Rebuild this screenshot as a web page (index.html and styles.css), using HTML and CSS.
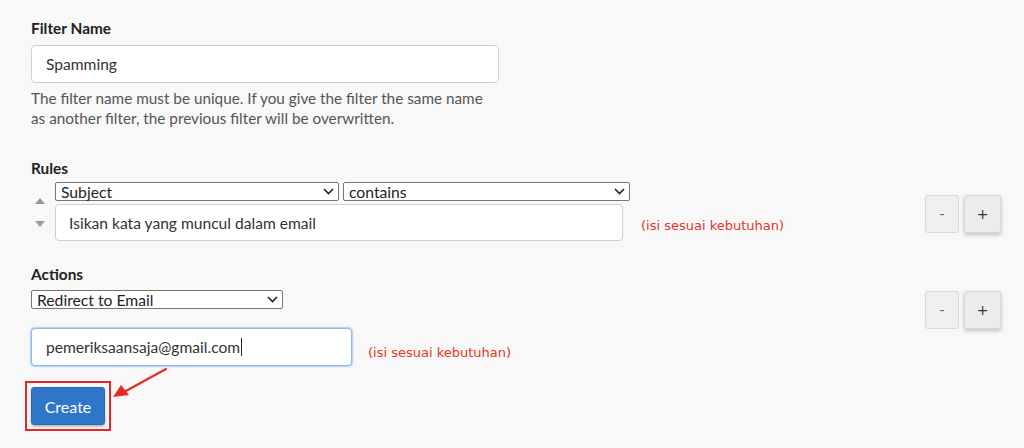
FILE: index.html
```html
<!DOCTYPE html>
<html>
<head>
<meta charset="utf-8">
<link rel="stylesheet" href="styles.css">
</head>
<body>
<div class="page">
  <div class="label first">Filter Name</div>
  <input class="field name-field" type="text" value="Spamming">
  <p class="help">The filter name must be unique. If you give the filter the same name<br>as another filter, the previous filter will be overwritten.</p>

  <div class="label rules-label">Rules</div>
  <div class="row rules-row">
    <div class="rule">
      <div class="movers">
        <span class="tri up"></span>
        <span class="tri down"></span>
      </div>
      <div class="rule-body">
        <div class="selects">
          <div class="select subject"><span>Subject</span><svg width="11" height="7" viewBox="0 0 11 7"><path d="M1 1l4.5 4.5L10 1" fill="none" stroke="#222" stroke-width="1.6"/></svg></div>
          <div class="select contains"><span>contains</span><svg width="11" height="7" viewBox="0 0 11 7"><path d="M1 1l4.5 4.5L10 1" fill="none" stroke="#222" stroke-width="1.6"/></svg></div>
        </div>
        <div class="inline">
          <input class="field rule-field" type="text" value="Isikan kata yang muncul dalam email">
          <span class="note note-rule">(isi sesuai kebutuhan)</span>
        </div>
      </div>
    </div>
    <div class="btns btns-rule">
      <button class="pm minus">-</button>
      <button class="pm plus">+</button>
    </div>
  </div>

  <div class="label actions-label">Actions</div>
  <div class="row actions-row">
    <div class="action">
      <div class="select redirect"><span>Redirect to Email</span><svg width="11" height="7" viewBox="0 0 11 7"><path d="M1 1l4.5 4.5L10 1" fill="none" stroke="#222" stroke-width="1.6"/></svg></div>
      <div class="inline email-line">
        <div class="field email-field focused"><span>pemeriksaansaja@gmail.com</span><span class="caret"></span></div>
        <span class="note note-email">(isi sesuai kebutuhan)</span>
      </div>
    </div>
    <div class="btns btns-action">
      <button class="pm minus">-</button>
      <button class="pm plus">+</button>
    </div>
  </div>

  <div class="highlight"><button class="create">Create</button></div>
</div>
<svg class="arrow" width="70" height="40" viewBox="0 0 70 40">
  <line x1="56" y1="3" x2="14" y2="26" stroke="#e52b22" stroke-width="2.2" stroke-linecap="round"/>
  <path d="M3 31 L11 19 L19 29 Z" fill="#e52b22"/>
</svg>
</body>
</html>
```

FILE: styles.css
```css
* { box-sizing: border-box; }
html, body { margin: 0; padding: 0; }
body {
  background: #f8f8f8;
  font-family: Lato, "Open Sans", sans-serif;
  color: #222;
  width: 1024px;
  height: 448px;
  overflow: hidden;
  position: relative;
}
.page {
  padding: 18px 0 0 31px;
  width: 1001px;
}
.label {
  font-weight: 700;
  font-size: 15.4px;
  line-height: 20px;
  color: #222;
}
.field {
  display: block;
  background: #fff;
  border: 1px solid #cfcfcf;
  border-radius: 4px;
  font-family: Lato, sans-serif;
  font-size: 15.6px;
  color: #333;
  padding: 0 14px;
  outline: none;
}
.name-field {
  margin-top: 7px;
  width: 468px;
  height: 38px;
}
.help {
  margin: 5px 0 0 0;
  font-size: 15.3px;
  line-height: 20px;
  color: #555;
}
.rules-label { margin-top: 30px; }
.row {
  display: flex;
  justify-content: space-between;
  align-items: flex-start;
}
.rules-row { margin-top: 4px; }
.rule { display: flex; }
.movers {
  width: 24px;
  display: flex;
  flex-direction: column;
  align-items: center;
  padding-top: 16px;
  padding-right: 6px;
}
.tri {
  width: 0; height: 0;
  border-left: 5px solid transparent;
  border-right: 5px solid transparent;
}
.tri.up { border-bottom: 6px solid #999; }
.tri.down { border-top: 6px solid #999; margin-top: 17px; }
.selects { display: flex; gap: 4px; }
.select {
  height: 19px;
  background: #fff;
  border: 1px solid #767676;
  border-radius: 2px;
  display: flex;
  align-items: center;
  justify-content: space-between;
  padding: 0 4px 0 5px;
  font-size: 15.7px;
  color: #222;
}
.subject { width: 284px; }
.contains { width: 287px; }
.redirect { width: 252px; margin-top: 6px; }
.inline { display: flex; align-items: center; }
.rule-field {
  margin-top: 3px;
  width: 568px;
  height: 37px;
  padding: 0 13px;
}
.note {
  font-family: "DejaVu Sans", Verdana, sans-serif;
  font-size: 13px;
  color: #e5342b;
}
.note-rule { margin-left: 18px; margin-top: 9px; }
.btns { display: flex; gap: 5px; }
.btns-rule { margin-top: 13px; }
.btns-action { margin-top: 7px; }
.pm {
  height: 38px;
  background: #efefef;
  border: 1px solid #d8d8d8;
  border-radius: 3px;
  font-family: "DejaVu Sans", sans-serif;
  font-size: 14px;
  color: #333;
  padding: 0;
}
.minus { width: 34px; color: #666; }
.plus {
  width: 37px;
  background: #ececec;
  box-shadow: 0 2px 4px rgba(0,0,0,0.22);
}
.actions-label { margin-top: 23px; }
.email-line { margin-top: 19px; }
.email-field {
  width: 321px;
  height: 38px;
  display: flex;
  align-items: center;
  border-color: #8db9ee;
  box-shadow: 0 0 0 1px rgba(120,170,240,0.35), 0 0 3px rgba(90,150,230,0.4);
}
.caret {
  display: inline-block;
  width: 1px;
  height: 18px;
  background: #222;
  margin-left: 1px;
}
.note-email { margin-left: 16px; margin-top: 10px; }
.highlight {
  display: inline-block;
  margin-top: 15px;
  margin-left: -6px;
  border: 2px solid #e3262a;
  padding: 4px;
}
.create {
  display: block;
  width: 74px;
  height: 38px;
  background: #2f76c9;
  color: #fff;
  border: 1px solid #2a68b3;
  border-radius: 3px;
  font-family: Lato, sans-serif;
  font-size: 16px;
  box-shadow: 0 2px 3px rgba(0,0,0,0.25);
  padding: 0;
}
.arrow {
  position: absolute;
  left: 110px;
  top: 366px;
}
```
